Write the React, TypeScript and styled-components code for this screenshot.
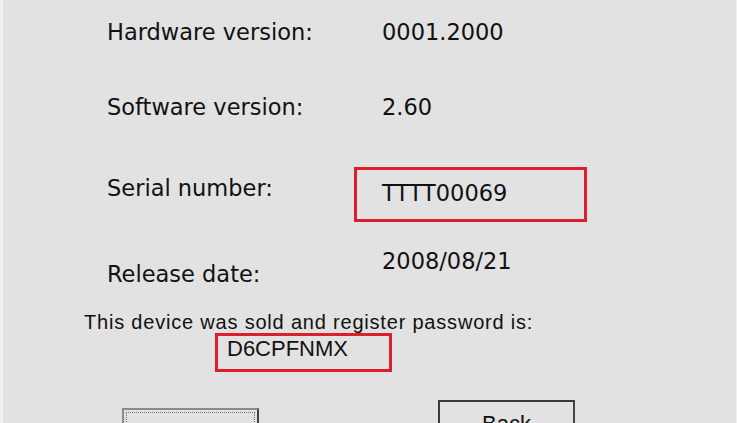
import React from "react";
import styled, { createGlobalStyle } from "styled-components";

const Global = createGlobalStyle`
  html, body { margin: 0; padding: 0; background: #f0f0f0; overflow: hidden; }
  #root { height: 423px; }
`;

const Screen = styled.div`
  height: 423px;
  margin: 0 1px 0 3px;
  background: #e2e2e2;
  overflow: hidden;
  display: flex;
  flex-direction: column;
  font-family: "DejaVu Sans", sans-serif;
  color: #111;
  & > * { flex-shrink: 0; }
`;

const InfoList = styled.div`
  display: flex;
  flex-direction: column;
  padding: 19px 0 0 104px;
`;

const Row = styled.div<{ $h: number }>`
  display: grid;
  grid-template-columns: 275px 1fr;
  align-items: start;
  height: ${(p) => p.$h}px;
`;

const Label = styled.div<{ $dy?: number }>`
  font-size: 22.5px;
  line-height: 26px;
  margin-top: ${(p) => p.$dy ?? 0}px;
`;

const Value = styled.div<{ $dy?: number; $boxed?: boolean }>`
  font-size: 22.5px;
  line-height: 26px;
  margin-top: ${(p) => p.$dy ?? 0}px;
  ${(p) =>
    p.$boxed &&
    `
    position: relative;
    &::before {
      content: "";
      position: absolute;
      left: -28px;
      top: -13px;
      width: 227px;
      height: 49px;
      border: 3px solid #dc1f2b;
    }
  `}
`;

const Notice = styled.div`
  margin-top: 1px;
  padding-left: 81px;
  font-family: "Liberation Sans", Arial, sans-serif;
  font-size: 20px;
  letter-spacing: 0.8px;
  line-height: 22px;
`;

const Password = styled.div`
  margin: 0 0 0 212px;
  width: 162px;
  height: 31px;
  box-sizing: content-box;
  border: 3px solid #dc1f2b;
  padding: 2px 0 0 9px;
  font-family: "Liberation Sans", Arial, sans-serif;
  font-size: 22px;
  line-height: 22px;
`;

const Buttons = styled.div`
  display: flex;
  align-items: flex-start;
  padding-left: 119px;
  gap: 179px;
  margin-top: 28px;
`;

const Button = styled.div<{ $focus?: boolean; $dy?: number }>`
  width: 137px;
  height: 40px;
  margin-top: ${(p) => p.$dy ?? 0}px;
  border: 2px solid ${(p) => (p.$focus ? "#8a8a8a" : "#3a3a3a")};
  border-right-color: #444;
  background: #e2e2e2;
  box-sizing: border-box;
  position: relative;
  font-family: "Liberation Sans", Arial, sans-serif;
  font-size: 22px;
  text-align: center;
  padding-top: 9px;
  ${(p) =>
    p.$focus &&
    `
    &::after {
      content: "";
      position: absolute;
      inset: 2px;
      border: 1px dotted #777;
    }
  `}
`;

export default function App() {
  return (
    <>
      <Global />
      <Screen>
        <InfoList>
          <Row $h={75}>
            <Label>Hardware version:</Label>
            <Value>0001.2000</Value>
          </Row>
          <Row $h={81}>
            <Label>Software version:</Label>
            <Value>2.60</Value>
          </Row>
          <Row $h={75}>
            <Label>Serial number:</Label>
            <Value $dy={5} $boxed>TTTT00069</Value>
          </Row>
          <Row $h={60}>
            <Label $dy={11}>Release date:</Label>
            <Value $dy={-2}>2008/08/21</Value>
          </Row>
        </InfoList>
        <Notice>This device was sold and register password is:</Notice>
        <Password>D6CPFNMX</Password>
        <Buttons>
          <Button $focus $dy={8}></Button>
          <Button>Back</Button>
        </Buttons>
      </Screen>
    </>
  );
}
